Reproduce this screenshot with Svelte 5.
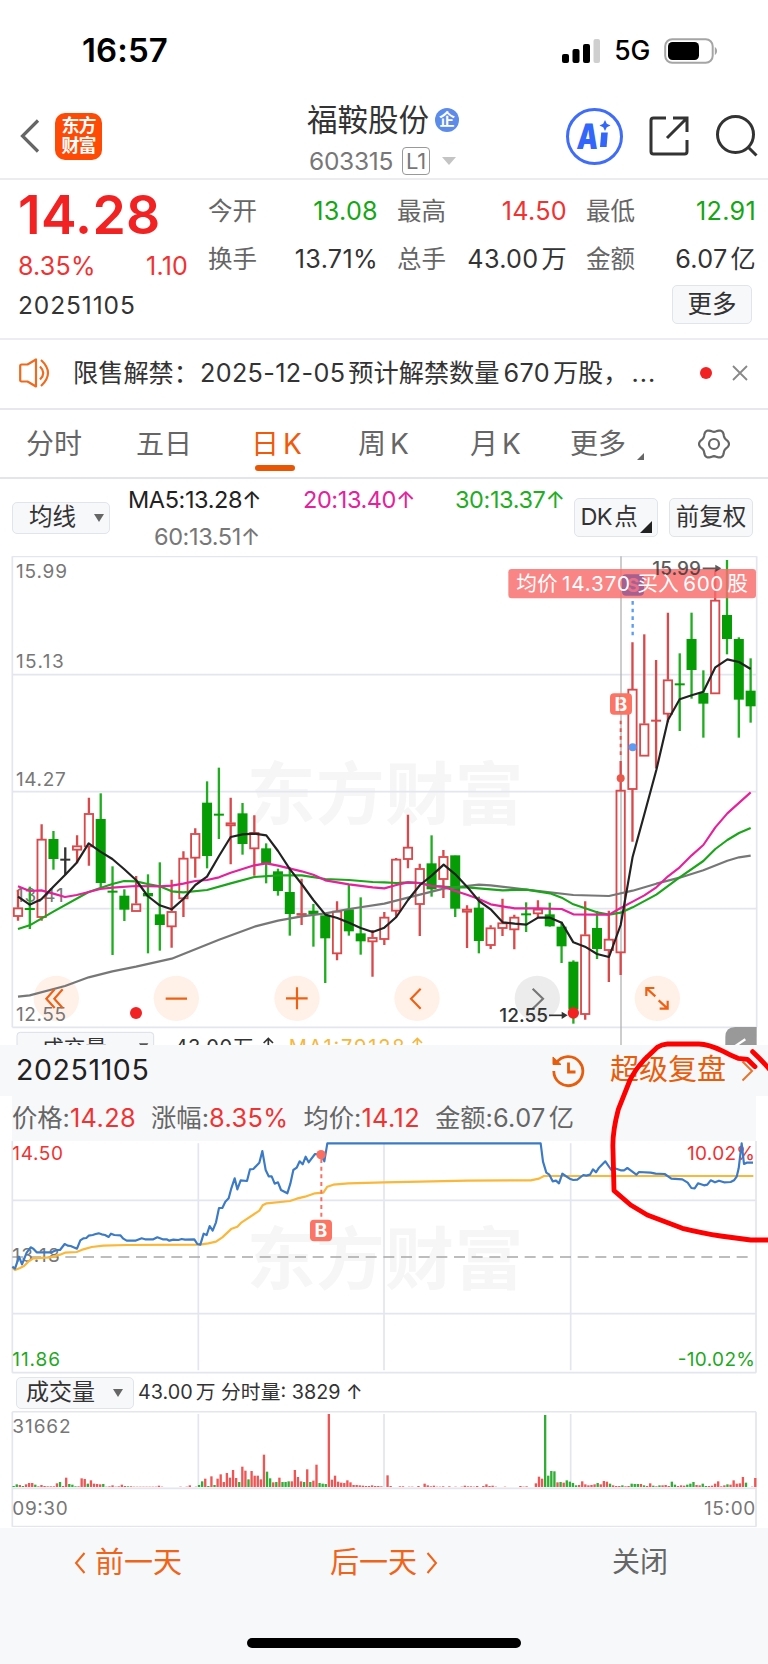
<script lang="ts">
  const quote = [
    { label: "今开", value: "13.08", tone: "down" },
    { label: "最高", value: "14.50", tone: "up" },
    { label: "最低", value: "12.91", tone: "down" },
    { label: "换手", value: "13.71%", tone: "" },
    { label: "总手", value: "43.00", unit: "万", tone: "" },
    { label: "金额", value: "6.07", unit: "亿", tone: "" },
  ];

  const tabs = [
    { zh: "分时", en: "" },
    { zh: "五日", en: "" },
    { zh: "日", en: "K" },
    { zh: "周", en: "K" },
    { zh: "月", en: "K" },
  ];
  let active = $state(2);

  const stats = [
    { label: "价格", value: "14.28", red: true },
    { label: "涨幅", value: "8.35%", red: true },
    { label: "均价", value: "14.12", red: true },
    { label: "金额", value: "6.07", unit: "亿", red: false },
  ];

  // six-lobed outline of the settings icon
  const gear = Array.from({ length: 72 }, (_, i) => {
    const a = (i * Math.PI) / 36;
    const r = 13.6 + 1.4 * Math.cos(6 * a);
    return `${(r * Math.cos(a)).toFixed(2)},${(r * Math.sin(a)).toFixed(2)}`;
  }).join(" ");

  // both charts use 3 units per css pixel
  // [kind, body top, body bottom, wick top, wick bottom]
  const candles: [string, number, number, number, number][] = [
    ["r", 383, 409, 330, 422], ["g", 385, 388, 320, 447], ["r", 177, 412, 133, 422],
    ["g", 178, 238, 153, 269], ["k", 237, 240, 202, 285], ["r", 197, 210, 166, 250],
    ["r", 100, 200, 53, 257], ["g", 118, 310, 40, 322], ["g", 333, 336, 259, 525],
    ["g", 348, 390, 328, 423], ["r", 371, 394, 288, 394], ["g", 340, 350, 283, 520],
    ["g", 404, 436, 247, 512], ["r", 394, 440, 299, 503], ["r", 234, 356, 214, 411],
    ["r", 160, 234, 145, 293], ["g", 69, 229, 4, 265], ["g", 102, 105, -37, 177],
    ["r", 128, 137, 53, 253], ["g", 101, 193, 69, 224], ["r", 157, 206, 106, 287],
    ["g", 206, 252, 190, 310], ["g", 275, 334, 266, 347], ["g", 337, 403, 262, 467],
    ["r", 400, 405, 296, 435], ["g", 393, 404, 372, 500], ["g", 407, 476, 407, 609],
    ["r", 393, 521, 364, 541], ["g", 389, 455, 314, 467], ["g", 461, 485, 352, 524],
    ["r", 472, 485, 450, 590], ["r", 411, 478, 396, 495], ["r", 237, 393, 234, 411],
    ["r", 201, 238, 104, 265], ["r", 265, 373, 251, 468], ["g", 251, 329, 166, 350],
    ["r", 229, 298, 210, 354], ["g", 227, 387, 227, 411], ["r", 387, 396, 376, 504],
    ["g", 384, 484, 350, 520], ["r", 443, 496, 436, 507], ["r", 428, 445, 356, 468],
    ["r", 411, 449, 404, 508], ["g", 401, 404, 367, 456], ["r", 387, 401, 361, 413],
    ["g", 404, 440, 368, 440], ["g", 441, 500, 425, 549], ["g", 546, 690, 541, 731],
    ["r", 464, 703, 364, 719], ["g", 445, 508, 393, 537], ["r", 477, 511, 392, 606],
    ["r", 30, 518, -57, 585], ["r", -273, 28, -413, 185], ["r", -169, -72, -437, -72],
    ["r", -180, -177, -360, -35], ["r", -301, -198, -502, -173], ["g", -289, -286, -380, -147],
    ["g", -422, -329, -502, -244], ["g", -260, -228, -329, -127], ["r", -540, -259, -630, -259],
    ["g", -494, -422, -660, -377], ["g", -422, -240, -428, -127], ["g", -267, -220, -365, -172],
  ];
  const candleX = (i: number) => 54 + i * 35.45;

  const ma5 = "54,350 89,374 124,358 160,320 195,285 230,248 266,190 301,215 337,237 372,267 408,300 443,348 479,376 515,388 550,357 586,315 621,290 657,228 692,171 728,163 763,161 799,166 834,213 870,268 905,312 940,360 976,404 1012,414 1047,428 1082,444 1118,456 1153,443 1189,411 1224,360 1260,315 1295,287 1331,254 1366,283 1401,320 1437,363 1472,388 1508,427 1544,431 1579,434 1614,413 1650,413 1685,428 1720,487 1755,500 1791,522 1827,531 1862,435 1898,230 1933,103 1969,-30 2004,-180 2039,-242 2075,-254 2110,-265 2146,-338 2182,-362 2217,-354 2252,-333";
  const ma20 = "54,319 89,333 124,331 160,341 195,351 230,345 266,336 301,327 337,323 408,318 479,319 515,317 550,311 586,303 621,300 657,292 692,278 763,256 799,250 834,257 905,274 940,284 976,301 1047,313 1118,322 1153,325 1189,315 1224,307 1260,309 1295,318 1331,320 1366,333 1401,344 1437,357 1472,373 1544,385 1614,385 1685,387 1720,403 1791,404 1827,404 1862,384 1898,365 1933,346 1969,322 2004,289 2039,262 2075,226 2110,195 2146,142 2182,100 2252,37";
  const ma30 = "54,447 89,436 160,395 266,336 301,324 337,312 372,303 408,304 443,312 479,319 515,334 550,337 621,330 692,310 763,291 834,286 905,286 976,297 1047,300 1118,306 1153,307 1189,309 1224,307 1260,309 1295,318 1366,322 1401,322 1508,331 1579,329 1650,340 1685,353 1720,373 1791,397 1827,404 1862,398 1898,382 1969,344 2039,292 2110,243 2146,207 2182,180 2217,159 2252,144";
  const ma60 = "54,650 89,646 195,618 266,592 337,574 408,560 515,536 657,479 763,440 834,422 905,409 976,400 1047,387 1153,371 1224,353 1331,326 1437,314 1472,316 1579,329 1720,345 1827,348 1898,332 1969,311 2039,293 2110,271 2182,242 2217,232 2252,227";

  const dayPrice = "37,710 45,716 57,680 66,703 80,668 92,652 100,656 110,667 155,667 163,663 172,660 180,660 194,642 203,647 212,648 231,656 241,631 250,625 259,624 266,617 278,615 287,612 296,610 305,613 315,615 326,621 333,611 343,615 361,616 370,626 380,632 406,632 425,625 435,628 460,628 472,622 488,628 500,628 508,632 520,629 535,630 545,627 555,629 583,628 592,642 601,644 611,611 620,615 629,588 638,602 648,577 657,534 667,534 676,515 686,505 694,475 704,445 712,478 722,451 741,453 750,418 760,417 778,398 787,363 797,420 806,439 815,439 824,461 834,457 843,480 862,490 871,461 880,420 890,413 899,394 908,403 917,380 926,397 945,372 963,374 973,394 982,340 1622,340 1629,395 1639,428 1648,434 1658,454 1668,452 1677,460 1687,431 1697,438 1709,446 1720,450 1732,449 1750,435 1759,437 1770,434 1779,418 1788,427 1797,413 1816,394 1834,420 1844,415 1862,421 1872,421 1882,414 1892,421 1909,434 1917,426 1952,428 1967,431 1994,432 2014,446 2047,448 2063,458 2074,474 2084,475 2094,460 2112,466 2122,464 2132,451 2145,457 2157,452 2172,457 2192,456 2202,451 2210,440 2216,415 2225,340 2232,402 2240,398 2259,398";
  const dayAvg = "37,714 45,720 60,714 72,708 85,695 100,685 150,682 180,674 195,668 230,666 250,658 275,651 310,647 380,645 600,644 625,640 648,635 667,622 695,596 712,590 725,577 778,542 788,526 800,520 870,513 890,506 915,500 945,490 970,488 982,470 1000,464 1045,460 1152,457 1402,452 1592,451 1617,446 1632,438 2260,438";

  // one bar per minute, negative = falling minute
  const volume = [
    -3, -8, 6, -3, 8, 12, 12, -7, 2, 6, 3, 2, 2, 2, 11, -15, 3, 28, -9, -7,
    -2, 2, 26, 24, -10, 20, 10, 9, 8, -9, 1, 2, 5, 1, 2, 7, 3, -2, 2, 1,
    1, 1, 1, 1, 1, 1, 1, 4, 1, 0, 0, 0, 0, 0, 1, 0, 1, 5, 0, 1,
    -6, -17, 25, -3, 32, -6, 25, 38, 15, 42, 28, 51, 27, -15, 61, 49, -23, 48, 34, 34,
    23, 97, -46, -26, 14, -15, 28, -15, -15, -17, 17, 51, 30, 17, -15, 53, -15, 19, 67, -12,
    -10, -9, 219, 22, 34, 16, 13, 12, 20, 14, 6, 6, 5, 4, 3, 3, 5, 3, 3, 2,
    0, 35, 3, 0, 0, 2, 2, 0, 1, 1, 0, 3, 0, 10, 5, 2, 4, 1, 1, 2,
    0, 2, 0, 1, 0, 1, 4, 2, 2, 1, 3, 0, 3, 8, 3, 4, 1, 0, 0, 1,
    0, 0, 0, 0, 3, 1, 2, 0, 0, 11, 31, 25, -216, -34, -48, -47, 14, -15, 13, -20,
    -16, -12, -5, 6, 17, 8, 5, 6, 8, -12, 8, 18, 16, -10, 5, 3, 3, -5, 2, 3,
    -10, -9, -9, 9, -5, 3, 11, -4, 2, -5, 5, 6, 3, -16, -7, 3, 5, 4, -7, -10,
    -15, 6, 5, -10, -3, 3, 4, 10, 17, 2, 5, -8, 7, 20, 10, 11, 30, -13, 0, 1,
    27,
  ];
</script>

<div class="screen">
  <div class="status">
    <span class="time">16:57</span>
    <div class="status-right">
      <svg width="38" height="24" viewBox="0 0 38 24">
        <rect x="0" y="15" width="7" height="9" rx="2" />
        <rect x="10.5" y="10" width="7" height="14" rx="2" />
        <rect x="21" y="5" width="7" height="19" rx="2" />
        <rect x="31.5" y="0" width="6.5" height="24" rx="2" fill="#cfcfcf" />
      </svg>
      <span class="net">5G</span>
      <svg width="54" height="26" viewBox="0 0 54 26">
        <rect x="1.2" y="1.2" width="47.500" height="23.6" rx="7" fill="none" stroke="#a5a5a5" stroke-width="2" />
        <rect x="4" y="4" width="31" height="18" rx="4.5" />
        <path d="M50.8 9c3 1.500 3 6.500 0 8z" fill="#a5a5a5" />
      </svg>
    </div>
  </div>

  <header class="nav">
    <div class="nav-side">
      <svg class="back" width="20" height="34" viewBox="0 0 20 34">
        <path d="M18 1.500L2.500 17 18 32.500" fill="none" stroke="#666" stroke-width="3.200" />
      </svg>
      <div class="logo"><span>东方</span><span>财富</span></div>
    </div>
    <div class="nav-title">
      <div class="name">福鞍股份<span class="badge">企</span></div>
      <div class="code">603315<span class="level">L1</span><i class="caret"></i></div>
    </div>
    <div class="nav-side nav-right">
      <div class="ai">
        <span>A</span>
        <svg width="13" height="29" viewBox="0 0 13 29">
          <path d="M7 0l1.800 3.700L12.500 5.500 8.800 7.300 7 11 5.200 7.300 1.500 5.500 5.200 3.700z" fill="#3366fa" />
          <path d="M3.200 12.500h6.600L8.600 27H2z" fill="#3366fa" />
        </svg>
      </div>
      <svg width="40" height="40" viewBox="0 0 40 40" fill="none" stroke="#333" stroke-width="3">
        <path d="M17 2H4.500Q2 2 2 4.500v31Q2 38 4.500 38h31q2.500 0 2.500-2.500V24" />
        <path d="M24 2h14v14M38 2L18 22" />
      </svg>
      <svg class="search" width="42" height="42" viewBox="0 0 42 42" fill="none" stroke="#333" stroke-width="3">
        <circle cx="19.500" cy="19.500" r="18" />
        <path d="M32 32l8.500 8.500" />
      </svg>
    </div>
  </header>

  <section class="quote">
    <div class="quote-left">
      <p class="price">14.28</p>
      <p class="change"><span>8.35%</span><span>1.10</span></p>
      <p class="date">20251105</p>
    </div>
    <div class="quote-right">
      <div class="quote-grid">
        {#each quote as q}
          <div class="cell">
            <span class="cell-label">{q.label}</span>
            <span class="cell-value {q.tone}">{q.value}{#if q.unit}<i class="unit">{q.unit}</i>{/if}</span>
          </div>
        {/each}
      </div>
      <button class="btn more">更多</button>
    </div>
  </section>

  <section class="notice">
    <svg width="34" height="30" viewBox="0 0 34 30" fill="none" stroke="#ef6a1f" stroke-width="2.200">
      <path d="M2.500 6.500h6L17 1.500v27l-8.500-5h-6Q1.200 23.500 1.200 22V8q0-1.500 1.300-1.500z" stroke-linejoin="round" />
      <path d="M21 8.500q6.500 6.500 0 13M22 2q14 13 0 26" />
    </svg>
    <p class="notice-text">限售解禁：<b>2025-12-05</b>预计解禁数量<b>670</b>万股，<em>...</em></p>
    <i class="dot"></i>
    <svg width="16" height="16" viewBox="0 0 16 16">
      <path d="M1 1l14 14M15 1L1 15" stroke="#888" stroke-width="1.800" />
    </svg>
  </section>

  <nav class="tabs">
    {#each tabs as t, i}
      <button class="tab" class:active={i === active} onclick={() => (active = i)}>
        {t.zh}{#if t.en}<span>{t.en}</span>{/if}
      </button>
    {/each}
    <button class="tab tab-more">更多<i class="corner"></i></button>
    <svg width="32" height="32" viewBox="-16 -16 32 32" fill="none" stroke="#666" stroke-width="2.200">
      <polygon points={gear} stroke-linejoin="round" />
      <circle r="5" />
    </svg>
  </nav>

  <section class="ma">
    <button class="btn ma-btn">均线<i class="tri"></i></button>
    <div class="ma-grid">
      <span class="c5">MA5:13.28<i>↑</i></span>
      <span class="c20">20:13.40<i>↑</i></span>
      <span class="c30">30:13.37<i>↑</i></span>
      <span class="c60">60:13.51<i>↑</i></span>
    </div>
    <button class="btn opt"><span class="dk">DK</span>点<i class="corner dark"></i></button>
    <button class="btn opt">前复权</button>
  </section>

  <svg class="kline" viewBox="0 -672 2304 1467">
    <text class="watermark" x="740" y="118" textLength="830">东方财富</text>

    <g class="grid">
      <path d="M37-671H2270M37-316H2270M37 35H2270M37 386H2270M37 742H2270M37-671V742M2270-671V742" />
    </g>
    <path d="M1863-671V795" stroke="#b4b4b4" stroke-width="4" />

    <g class="buttons">
      {#each [169, 529, 891, 1251, 1612, 1972] as cx, i}
        <circle {cx} cy="655" r="68" fill={i === 4 ? "#ececec" : "#fff0e8"} />
      {/each}
    </g>

    <g class="axis">
      <text x="48" y="-606" textLength="153">15.99</text>
      <text x="48" y="-337" textLength="143">15.13</text>
      <text x="48" y="17" textLength="149">14.27</text>
      <text x="48" y="366" textLength="143">13.41</text>
      <text x="48" y="722" textLength="150">12.55</text>
    </g>

    {#each candles as [kind, top, bottom, high, low], i}
      {@const x = candleX(i)}
      <g class={kind}>
        {#if kind === "r" && bottom - top > 4}
          <path class="wick" d="M{x} {high}V{top}M{x} {bottom}V{low}" />
          <rect x={x - 12.5} y={top + 2} width="25" height={bottom - top - 3} class="hollow" />
        {:else}
          <path class="wick" d="M{x} {high}V{low}" />
          <rect x={x - 15} y={top - 1} width="30" height={Math.max(bottom - top, 6)} class="solid" />
        {/if}
      </g>
    {/each}

    <g class="lines">
      <polyline points={ma60} stroke="#777" />
      <polyline points={ma30} stroke="#1ba51b" />
      <polyline points={ma20} stroke="#e5219b" />
      <polyline points={ma5} stroke="#222" />
    </g>

    <g class="icons">
      <path d="M164 628L139 656l25 28M188 628L163 656l25 28M497 656h64M858 655h65M891 622v66M1262 626l-29 30 29 30" />
      <path d="M1939 648V624h24M1940 625l26 24M2003 662v24h-24M2002 685l-26-24" />
      <path d="M1598 626l31 30-31 30" stroke="#777" />
    </g>
    <circle cx="408" cy="699" r="18" fill="#f32222" />
    <circle cx="1720" cy="699" r="17" fill="#f32222" />

    <path d="M1862-178V-75" stroke="#e0574f" stroke-width="6" stroke-dasharray="11 12" />
    <rect x="1830" y="-260" width="66" height="64" rx="12" fill="#fb7464" />
    <text class="flag" x="1863" y="-207">B</text>
    <path d="M1859-253v50" stroke="#e0574f" stroke-width="4" stroke-dasharray="10 10" opacity="0.500" />
    <circle cx="1862" cy="-5" r="12" fill="#e9594b" />

    <path d="M1898-537V-430" stroke="#5b9cf5" stroke-width="7" stroke-dasharray="11 12" />
    <circle cx="1898" cy="-98" r="12" fill="#5b9cf5" />

    <rect x="1525" y="-633" width="743" height="88" rx="10" fill="#f96e6e" opacity="0.840" />
    <rect x="1866" y="-617" width="66" height="64" rx="12" fill="#a5608f" />
    <text class="flag sell" x="1899" y="-564">S</text>

    <g class="mark">
      <text x="1498" y="726" textLength="146">12.55</text>
      <path d="M1647 706h44" /><path class="head" d="M1685 695l18 11-18 11z" />
      <g opacity="0.800">
        <text x="1957" y="-615" textLength="146">15.99</text>
        <path d="M2108-635h46" /><path class="head" d="M2146-646l18 11-18 11z" />
      </g>
    </g>

    <g class="tip">
      <text x="1549" y="-566">均价</text>
      <text x="1686" y="-566" textLength="204">14.370</text>
      <text x="1912" y="-566">买入</text>
      <text x="2050" y="-566" textLength="120">600</text>
      <text x="2182" y="-566">股</text>
    </g>

    <rect x="51" y="757" width="410" height="90" rx="10" fill="#f7f8fa" stroke="#dcdee6" stroke-width="3" />
    <g class="strip">
      <text x="126" y="829" class="strip-name">成交量</text>
      <path d="M417 790h28l-14 22z" fill="#555" />
      <text x="524" y="822" textLength="172">43.00</text>
      <text x="700" y="824">万</text>
      <path d="M805 830V776M791 789l14-14 14 14" stroke="#333" stroke-width="5" fill="none" />
      <text x="866" y="822" textLength="348" class="gold">MA1:79128</text>
      <path d="M1252 830V776M1238 789l14-14 14 14" stroke="#f6b73c" stroke-width="5" fill="none" />
    </g>
    <path d="M2176 795V771q0-30 30-30h64v54z" fill="#999" />
    <path d="M2236 778l-30 20" stroke="#fff" stroke-width="7" />
  </svg>

  <section class="replay">
    <div class="replay-head">
      <span class="replay-date">20251105</span>
      <svg width="34" height="34" viewBox="0 0 34 34" fill="none" stroke="#e85d0c" stroke-width="2.800">
        <path d="M5 9.500A14.500 14.500 0 1 1 2.800 17" />
        <path d="M17.500 8.500V18h7" />
        <path d="M2 3v7.500h8z" fill="#e85d0c" stroke-width="1" />
      </svg>
      <span class="replay-link">超级复盘</span>
      <svg width="13" height="22" viewBox="0 0 13 22">
        <path d="M1.500 1.500L11 11l-9.500 9.500" fill="none" stroke="#e8742c" stroke-width="2" />
      </svg>
    </div>

    <div class="stats">
      {#each stats as s}
        <span>{s.label}:<b class:up={s.red}>{s.value}</b>{#if s.unit}<i class="unit">{s.unit}</i>{/if}</span>
      {/each}
    </div>

    <svg class="minute" viewBox="0 333 2304 699">
      <text class="watermark" x="740" y="763" textLength="830">东方财富</text>
      <g class="grid">
        <path d="M37 511H2268M37 851H2268M37 1028H2268M37 333V1028M2268 333V1028M595 340V1021M1152 340V1021M1712 340V1021" />
      </g>
      <path d="M37 681H2256" stroke="#a8a8a8" stroke-width="5" stroke-dasharray="33 20" />
      <g class="axis">
        <text x="37" y="390" textLength="152" class="up">14.50</text>
        <text x="37" y="697" textLength="142">13.18</text>
        <text x="37" y="1007" textLength="143" class="down">11.86</text>
        <text x="2061" y="390" textLength="204" class="up">10.02%</text>
        <text x="2033" y="1007" textLength="232" class="down">-10.02%</text>
      </g>
      <g class="lines">
        <polyline points={dayAvg} stroke="#fbb737" />
        <polyline points={dayPrice} stroke="#3b7ac6" />
      </g>
      <path d="M964 387V568" stroke="#fb6f62" stroke-width="6" stroke-dasharray="12 11" />
      <circle cx="963" cy="374" r="14" fill="#fb6f62" />
      <rect x="930" y="569" width="66" height="65" rx="12" fill="#fb7464" />
      <text class="flag" x="963" y="622">B</text>
    </svg>

    <div class="vol-head">
      <button class="btn vol-btn">成交量<i class="tri"></i></button>
      <span>43.00<i class="unit">万</i> 分时量: 3829 ↑</span>
    </div>

    <svg class="vol" viewBox="0 393 2304 348">
      <g class="grid">
        <path d="M37 395H2268M37 625H2268M37 740H2268M37 395V740M2268 395V740M595 402V621M1152 402V621M1712 402V621" />
      </g>
      {#each volume as v, i}
        {#if v}
          <rect x={37.5 + i * 9.27} y={621 - Math.abs(v)} width="7" height={Math.abs(v)} fill={v > 0 ? "#f05555" : "#2fae35"} />
        {/if}
      {/each}
      <g class="axis">
        <text x="37" y="459" textLength="175">31662</text>
        <text x="37" y="706" textLength="166">09:30</text>
        <text x="2112" y="706" textLength="154">15:00</text>
      </g>
    </svg>

    <svg class="scribble" viewBox="0 0 2304 750">
      <path d="M2265 110L2242 88 2214 85Q2190 75 2170 64 2125 42 2097 42H2002Q1985 43 1972 52L1932 90Q1905 120 1890 150L1855 238Q1836 310 1839 360L1842 482 1892 525 1942 555 2047 595Q2110 610 2162 618L2252 630H2310" />
      <path d="M2258 65Q2290 95 2320 132" />
    </svg>
  </section>

  <footer class="foot">
    <button>
      <svg width="12" height="22" viewBox="0 0 12 22"><path d="M10.500 1L2 11l8.500 10" fill="none" stroke="#f0641a" stroke-width="2" /></svg>
      前一天
    </button>
    <button>
      后一天
      <svg width="12" height="22" viewBox="0 0 12 22"><path d="M1.500 1L10 11 1.500 21" fill="none" stroke="#f0641a" stroke-width="2" /></svg>
    </button>
    <button class="close">关闭</button>
  </footer>
  <div class="home"></div>
</div>

<style>
  :global(body) { background: #fff; }
  .screen {
    width: 768px;
    height: 1664px;
    overflow: hidden;
    display: flex;
    flex-direction: column;
    font-family: Inter, "Noto Sans CJK SC", sans-serif;
    line-height: 1.2;
    color: #333;
    background: #fff;
  }
  p { margin: 0; }
  i, em { font-style: normal; }
  b { font-weight: inherit; }
  svg { display: block; flex: none; }
  button {
    font: inherit;
    color: inherit;
    background: none;
    border: 0;
    padding: 0;
    white-space: nowrap;
  }
  .up { color: #f03232; fill: #f03232; }
  .down { color: #14a614; fill: #14a614; }
  .unit { margin-left: 3px; }
  .btn {
    display: flex;
    flex: none;
    align-items: center;
    box-sizing: border-box;
    background: #f7f8fa;
    border: 1.5px solid #e1e4ea;
    border-radius: 5px;
  }
  .tri {
    border: 5px solid transparent;
    border-top: 8px solid #666;
    border-bottom: 0;
  }
  .corner {
    border-left: 7px solid transparent;
    border-bottom: 7px solid #666;
  }
  .corner.dark { border-left-width: 12px; border-bottom: 12px solid #222; }

  .status {
    height: 102px;
    box-sizing: border-box;
    padding: 0 50px 0 82px;
    display: flex;
    align-items: center;
    justify-content: space-between;
    color: #000;
  }
  .time { font-size: 33px; font-weight: 600; letter-spacing: 0.1px; }
  .status-right { display: flex; align-items: center; gap: 14px; }
  .net { font-size: 26.500px; font-weight: 500; letter-spacing: -0.2px; }

  .nav {
    height: 78px;
    box-sizing: border-box;
    border-bottom: 2px solid #ececee;
    padding: 0 10px 0 20px;
    display: grid;
    grid-template-columns: 1fr 150px 1fr;
    grid-template-rows: 68px;
  }
  .nav-side { display: flex; align-items: center; gap: 15px; }
  .logo {
    width: 47px;
    height: 47px;
    border-radius: 10px;
    background: #ff4a05;
    color: #fff;
    font-size: 18px;
    font-weight: 700;
    line-height: 20px;
    display: flex;
    flex-direction: column;
    align-items: center;
    justify-content: center;
    letter-spacing: -1px;
  }
  .nav-title { margin: 0 -10px; padding-left: 3px; }
  .name {
    display: flex;
    align-items: center;
    gap: 6px;
    font-size: 30.500px;
    line-height: 36px;
    white-space: nowrap;
  }
  .badge {
    width: 24px;
    height: 24px;
    border-radius: 50%;
    background: #5c8bea;
    color: #fff;
    font-size: 16px;
    font-weight: 700;
    line-height: 23px;
    text-align: center;
  }
  .code {
    display: flex;
    align-items: center;
    padding: 8px 0 0 2px;
    font-size: 24.500px;
    line-height: 30px;
    color: #777;
    letter-spacing: -0.3px;
  }
  .level {
    width: 26px;
    height: 26px;
    margin: 0 12px 0 9px;
    line-height: 26px;
    font-size: 22px;
    text-align: center;
    border: 1.5px solid #999;
    border-radius: 4px;
  }
  .caret { border: 7px solid transparent; border-top: 8px solid #c4c4c4; border-bottom: 0; }
  .nav-right { justify-content: flex-end; gap: 26px; }
  .search { margin-left: 1px; }
  .ai {
    width: 57px;
    height: 57px;
    box-sizing: border-box;
    border: 3.5px solid #3f6cf8;
    border-radius: 50%;
    display: flex;
    align-items: center;
    justify-content: center;
    color: #3366fa;
    font-size: 35px;
    font-weight: 900;
    line-height: 50px;
  }
  .ai span { transform: skewX(-5deg) scaleX(0.76); margin-right: -3px; margin-left: -4px; }
  .ai svg { margin-top: -4px; }

  .quote {
    height: 160px;
    box-sizing: border-box;
    border-bottom: 2px solid #ececf2;
    padding: 2px 11px 0 18px;
    display: grid;
    grid-template-columns: 170px 549px;
    gap: 20px;
    font-size: 24.500px;
  }
  .price {
    font-size: 53.500px;
    font-weight: 600;
    line-height: 66px;
    color: #f32222;
    letter-spacing: 0.3px;
  }
  .change {
    display: flex;
    justify-content: space-between;
    font-size: 25px;
    line-height: 37px;
    color: #f03232;
    letter-spacing: 0.200px;
  }
  .date { line-height: 41px; letter-spacing: 0.9px; }
  .quote-right { padding-top: 6px; }
  .quote-grid { display: grid; grid-template-columns: repeat(3, 170px); column-gap: 19px; }
  .cell { display: flex; justify-content: space-between; line-height: 47.500px; white-space: nowrap; }
  .cell-label { color: #666; }
  .cell-value { font-size: 25.200px; letter-spacing: 0.300px; }
  .more {
    width: 80px;
    height: 39px;
    margin: 2px 5px 0 auto;
    justify-content: center;
  }

  .notice {
    height: 70px;
    box-sizing: border-box;
    border-bottom: 2px solid #e8e8ec;
    padding: 0 20px 2px 19px;
    display: flex;
    align-items: center;
  }
  .notice-text {
    width: 606px;
    margin-left: 20px;
    font-size: 25.200px;
    line-height: 40px;
    white-space: nowrap;
  }
  .notice-text b { margin: 0 3px 0 4px; letter-spacing: 0.350px; }
  .notice-text b:first-child { margin-left: 1px; }
  .notice-text em { margin-left: 3px; letter-spacing: 1px; }
  .dot {
    width: 12px;
    height: 12px;
    margin: 0 20px 0 auto;
    border-radius: 50%;
    background: #f32222;
  }

  .tabs {
    height: 69px;
    box-sizing: border-box;
    border-bottom: 2px solid #e4e4ec;
    padding-left: 26px;
    display: grid;
    grid-template-columns: 110px 115px 107px 112px 100px 128px auto;
    align-items: center;
    font-size: 28px;
    color: #666;
  }
  .tab {
    height: 67px;
    line-height: 69px;
    text-align: left;
    display: grid;
    grid-template-columns: auto auto;
    justify-content: start;
    column-gap: 4px;
  }
  .tab.active { color: #f05a0a; }
  .tab.active::after {
    content: "";
    grid-column: 1 / 3;
    width: 40px;
    height: 6px;
    margin: -14px 0 0 4px;
    border-radius: 3px;
    background: #ea5504;
  }
  .tab-more { align-items: end; column-gap: 11px; }
  .tab-more .corner { margin-bottom: 19px; }

  .ma {
    height: 77px;
    padding: 0 15px 0 12px;
    display: flex;
    align-items: center;
    font-size: 23.500px;
  }
  .ma-btn { width: 98px; height: 32px; padding: 0 5px 0 16px; justify-content: space-between; }
  .ma-grid {
    width: 447px;
    margin: 0 auto 0 18px;
    display: grid;
    grid-template-columns: 175px 152px auto;
    line-height: 37px;
    letter-spacing: -0.4px;
    white-space: nowrap;
  }
  .c5 { color: #222; }
  .c20 { color: #e5219b; }
  .c30 { color: #1fae1f; }
  .c60 { color: #777; padding-left: 26px; }
  .opt {
    width: 84px;
    height: 39px;
    justify-content: center;
    margin-left: 11px;
  }
  .ma-grid + .opt { margin-left: 0; }
  .dk { margin-right: 2px; letter-spacing: -0.5px; }
  .opt .corner { align-self: flex-end; margin: 0 0 3px 2px; flex: none; }

  .kline { width: 768px; height: 489px; }
  .minute { width: 768px; height: 233px; }
  .vol { width: 768px; height: 116px; }
  .grid path { fill: none; stroke: #e4e5ee; stroke-width: 5; }
  .watermark {
    font-size: 206px;
    font-weight: 700;
    fill: #f6f6f6;
  }
  .axis text { font-size: 57px; fill: #777; }
  .axis text.up { fill: #f03232; }
  .axis text.down { fill: #1fa81f; }
  .wick { stroke-width: 7; fill: none; }
  .r .wick, .r .hollow { stroke: #d9494c; }
  .r .solid { fill: #d9494c; }
  .r .hollow { fill: #fff; fill-opacity: 0; stroke-width: 5.500; }
  .g .wick { stroke: #1fae1f; }
  .g .solid { fill: #069c06; }
  .k .wick { stroke: #333; }
  .k .solid { fill: #333; }
  .lines polyline { fill: none; stroke-width: 6.500; stroke-linejoin: round; }
  .icons path { fill: none; stroke: #ee6013; stroke-width: 6.5; }
  .icons path:last-child { stroke: #777; }
  .mark text { font-size: 57px; font-weight: 500; fill: #333; }
  .mark path { stroke: #333; stroke-width: 5; }
  .mark .head { fill: #333; stroke: none; }
  .flag { font-size: 58px; font-weight: 700; fill: #fff; text-anchor: middle; }
  .flag.sell { fill: #e87088; }
  .tip text { font-size: 62px; fill: #fff; }
  .strip text { font-size: 60px; fill: #333; }
  .strip text.strip-name { font-size: 65px; }
  .strip text.gold { fill: #f6b73c; }

  .replay { position: relative; height: 483px; }
  .replay-head {
    height: 51px;
    box-sizing: border-box;
    padding: 0 14px 0 16px;
    background: #f7f8fa;
    display: flex;
    align-items: center;
    color: #e85d0c;
  }
  .replay-date { margin-right: auto; font-size: 28.500px; letter-spacing: 0.6px; color: #222; }
  .replay-link { margin: 0 15px 0 25px; font-size: 29px; }
  .stats {
    height: 45px;
    margin: 0 12px;
    background: #f7f8fa;
    display: flex;
    align-items: center;
    gap: 15px;
    font-size: 25.300px;
    color: #666;
  }
  .stats b { letter-spacing: 0.4px; }
  .vol-head {
    height: 37px;
    padding-left: 16px;
    display: flex;
    align-items: center;
    gap: 4px;
    font-size: 19.800px;
    white-space: pre;
  }
  .vol-btn { width: 118px; height: 32px; padding: 0 10px 0 9px; justify-content: space-between; font-size: 23px; }
  .scribble {
    position: absolute;
    top: -15px;
    left: 0;
    width: 768px;
    height: 250px;
    pointer-events: none;
  }
  .scribble path {
    fill: none;
    stroke: #fe0000;
    stroke-width: 14.500;
    stroke-linecap: round;
    stroke-linejoin: round;
  }

  .foot {
    height: 70px;
    background: #f7f8fa;
    display: grid;
    grid-template-columns: 256px 256px 256px;
    align-items: center;
    justify-items: center;
    font-size: 29px;
    color: #f0641a;
  }
  .foot button { display: flex; align-items: center; gap: 9px; }
  .foot .close { color: #666; font-size: 28px; }
  .home {
    flex: 1;
    background: #f7f8fa;
    display: flex;
    justify-content: center;
    align-items: flex-end;
    padding-bottom: 16px;
  }
  .home::after {
    content: "";
    width: 274px;
    height: 10px;
    border-radius: 5px;
    background: #000;
  }
</style>
